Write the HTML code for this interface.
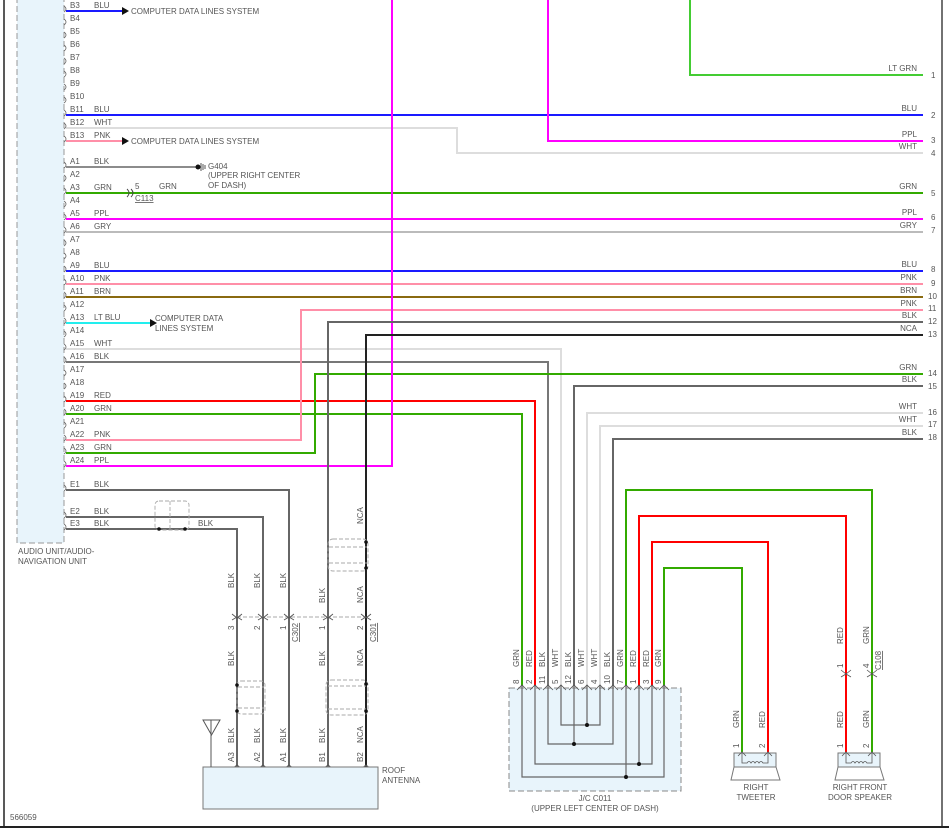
<!DOCTYPE html>
<html><head><meta charset="utf-8"><style>
html,body{margin:0;padding:0;background:#fff;}
svg{display:block;font-family:"Liberation Sans",sans-serif;}
text{font-size:8px;fill:#555;}
</style></head><body>
<svg width="949" height="835" viewBox="0 0 949 835" xmlns="http://www.w3.org/2000/svg">
<!-- frame -->
<line x1="4" y1="0" x2="4" y2="827" stroke="#222" stroke-width="1.5"/>
<line x1="942" y1="0" x2="942" y2="827" stroke="#444" stroke-width="1.5"/>
<line x1="0" y1="827" x2="949" y2="827" stroke="#222" stroke-width="2"/>
<!-- audio unit -->
<rect x="17" y="-2" width="47" height="545" fill="#e8f4fb" stroke="#999" stroke-dasharray="6,3"/>
<text x="18" y="554">AUDIO UNIT/AUDIO-</text>
<text x="18" y="564">NAVIGATION UNIT</text>
<text x="10" y="820">566059</text>

<g fill="none" stroke-width="2">
<!-- left wires -->
<path d="M66 11H122" stroke="#1a1aff"/>
<path d="M66 115H923" stroke="#1a1aff"/>
<path d="M66 128H457V153H923" stroke="#ddd"/>
<path d="M66 141H122" stroke="#ff8fa8"/>
<path d="M66 167H196" stroke="#666" stroke-width="1.5"/>
<path d="M66 193H923" stroke="#33aa00"/>
<path d="M66 219H923" stroke="#ff00ff"/>
<path d="M66 232H923" stroke="#bbb"/>
<path d="M66 271H923" stroke="#1a1aff"/>
<path d="M66 284H923" stroke="#ff8fa8"/>
<path d="M66 297H923" stroke="#8a6a10"/>
<path d="M66 323H150" stroke="#22eeee"/>
<path d="M66 349H561V686" stroke="#ddd"/>
<path d="M66 362H548V686" stroke="#777"/>
<path d="M66 401H535V686" stroke="#ff0000"/>
<path d="M66 414H522V686" stroke="#33aa00"/>
<path d="M66 440H301V310H923" stroke="#ff8fa8"/>
<path d="M66 453H315V374H923" stroke="#33aa00"/>
<path d="M66 466H392V0" stroke="#ff00ff"/>
<path d="M548 0V141H923" stroke="#ff00ff"/>
<path d="M690 0V75H923" stroke="#44cc33"/>
<path d="M328 767V322H923" stroke="#666"/>
<path d="M366 767V335H923" stroke="#222"/>
<path d="M574 686V386H923" stroke="#666"/>
<path d="M587 686V413H923" stroke="#ddd"/>
<path d="M600 686V426H923" stroke="#ddd"/>
<path d="M613 686V439H923" stroke="#666"/>
<path d="M66 490H289V767" stroke="#666"/>
<path d="M66 517H263V767" stroke="#666"/>
<path d="M66 529H237V767" stroke="#666"/>
<!-- speaker loops -->
<path d="M626 686V490H872V752" stroke="#33aa00"/>
<path d="M639 686V516H846V752" stroke="#ff0000"/>
<path d="M652 686V542H768V752" stroke="#ff0000"/>
<path d="M664 686V568H742V752" stroke="#33aa00"/>
</g>
<!-- arrows -->
<polygon points="122,7 129,11 122,15" fill="#111"/>
<polygon points="122,137 129,141 122,145" fill="#111"/>
<polygon points="150,319 157,323 150,327" fill="#111"/>
<!-- pin brackets & labels -->
<g fill="none" stroke="#666" stroke-width="0.8">
<path d="M64 6q4 3 0 6M64 19q4 3 0 6M64 32q4 3 0 6M64 45q4 3 0 6M64 58q4 3 0 6M64 71q4 3 0 6M64 84q4 3 0 6M64 97q4 3 0 6M64 110q4 3 0 6M64 123q4 3 0 6M64 136q4 3 0 6M64 162q4 3 0 6M64 175q4 3 0 6M64 188q4 3 0 6M64 201q4 3 0 6M64 214q4 3 0 6M64 227q4 3 0 6M64 240q4 3 0 6M64 253q4 3 0 6M64 266q4 3 0 6M64 279q4 3 0 6M64 292q4 3 0 6M64 305q4 3 0 6M64 318q4 3 0 6M64 331q4 3 0 6M64 344q4 3 0 6M64 357q4 3 0 6M64 370q4 3 0 6M64 383q4 3 0 6M64 396q4 3 0 6M64 409q4 3 0 6M64 422q4 3 0 6M64 435q4 3 0 6M64 448q4 3 0 6M64 461q4 3 0 6M64 485q4 3 0 6M64 512q4 3 0 6M64 524q4 3 0 6"/>
</g>
<g>
<text x="70" y="8">B3</text><text x="94" y="8">BLU</text>
<text x="70" y="21">B4</text><text x="70" y="34">B5</text><text x="70" y="47">B6</text><text x="70" y="60">B7</text><text x="70" y="73">B8</text><text x="70" y="86">B9</text><text x="70" y="99">B10</text>
<text x="70" y="112">B11</text><text x="94" y="112">BLU</text>
<text x="70" y="125">B12</text><text x="94" y="125">WHT</text>
<text x="70" y="138">B13</text><text x="94" y="138">PNK</text>
<text x="70" y="164">A1</text><text x="94" y="164">BLK</text>
<text x="70" y="177">A2</text>
<text x="70" y="190">A3</text><text x="94" y="190">GRN</text>
<text x="70" y="203">A4</text>
<text x="70" y="216">A5</text><text x="94" y="216">PPL</text>
<text x="70" y="229">A6</text><text x="94" y="229">GRY</text>
<text x="70" y="242">A7</text><text x="70" y="255">A8</text>
<text x="70" y="268">A9</text><text x="94" y="268">BLU</text>
<text x="70" y="281">A10</text><text x="94" y="281">PNK</text>
<text x="70" y="294">A11</text><text x="94" y="294">BRN</text>
<text x="70" y="307">A12</text>
<text x="70" y="320">A13</text><text x="94" y="320">LT BLU</text>
<text x="70" y="333">A14</text>
<text x="70" y="346">A15</text><text x="94" y="346">WHT</text>
<text x="70" y="359">A16</text><text x="94" y="359">BLK</text>
<text x="70" y="372">A17</text><text x="70" y="385">A18</text>
<text x="70" y="398">A19</text><text x="94" y="398">RED</text>
<text x="70" y="411">A20</text><text x="94" y="411">GRN</text>
<text x="70" y="424">A21</text>
<text x="70" y="437">A22</text><text x="94" y="437">PNK</text>
<text x="70" y="450">A23</text><text x="94" y="450">GRN</text>
<text x="70" y="463">A24</text><text x="94" y="463">PPL</text>
<text x="70" y="487">E1</text><text x="94" y="487">BLK</text>
<text x="70" y="514">E2</text><text x="94" y="514">BLK</text>
<text x="70" y="526">E3</text><text x="94" y="526">BLK</text>
<text x="198" y="526">BLK</text>
<text x="131" y="14">COMPUTER DATA LINES SYSTEM</text>
<text x="131" y="144">COMPUTER DATA LINES SYSTEM</text>
<text x="155" y="321">COMPUTER DATA</text>
<text x="155" y="331">LINES SYSTEM</text>
<text x="208" y="169">G404</text>
<text x="208" y="178">(UPPER RIGHT CENTER</text>
<text x="208" y="188">OF DASH)</text>
<text x="135" y="189">5</text><text x="159" y="189">GRN</text>
<text x="135" y="201" text-decoration="underline">C113</text>
</g>
<!-- G404 ground & C113 -->
<circle cx="198" cy="167" r="2.5" fill="#111"/>
<path d="M201 163v8M203 164v6M205 165v4" stroke="#555" stroke-width="1"/>
<path d="M127 189q4 4 0 8M131 189q4 4 0 8" stroke="#444" fill="none" stroke-width="0.9"/>
<!-- right labels -->
<g text-anchor="end">
<text x="917" y="71">LT GRN</text><text x="917" y="111">BLU</text><text x="917" y="137">PPL</text><text x="917" y="149">WHT</text>
<text x="917" y="189">GRN</text><text x="917" y="215">PPL</text><text x="917" y="228">GRY</text><text x="917" y="267">BLU</text>
<text x="917" y="280">PNK</text><text x="917" y="293">BRN</text><text x="917" y="306">PNK</text><text x="917" y="318">BLK</text>
<text x="917" y="331">NCA</text><text x="917" y="370">GRN</text><text x="917" y="382">BLK</text><text x="917" y="409">WHT</text>
<text x="917" y="422">WHT</text><text x="917" y="435">BLK</text>
</g>
<g>
<text x="931" y="78">1</text><text x="931" y="118">2</text><text x="931" y="143">3</text><text x="931" y="156">4</text>
<text x="931" y="196">5</text><text x="931" y="220">6</text><text x="931" y="233">7</text><text x="931" y="272">8</text>
<text x="931" y="286">9</text><text x="928" y="299">10</text><text x="928" y="311">11</text><text x="928" y="324">12</text>
<text x="928" y="337">13</text><text x="928" y="376">14</text><text x="928" y="389">15</text><text x="928" y="415">16</text>
<text x="928" y="427">17</text><text x="928" y="440">18</text>
</g>
<!-- shields -->
<g fill="none" stroke="#aaa" stroke-dasharray="4,2" stroke-width="0.9">
<rect x="155" y="501" width="34" height="29" rx="4"/>
<rect x="328" y="539" width="40" height="32" rx="5"/>
<rect x="237" y="681" width="28" height="33" rx="4"/>
<rect x="326" y="680" width="42" height="35" rx="5"/>
<path d="M170 501v29"/>
<path d="M329 547h38M329 563h38M238 687h26M238 708h26M328 686h38M328 709h38"/>
<path d="M237 617H366"/>
</g>
<g fill="#111">
<circle cx="159" cy="529" r="1.8"/><circle cx="185" cy="529" r="1.8"/>
<circle cx="366" cy="542" r="1.8"/><circle cx="366" cy="568" r="1.8"/>
<circle cx="237" cy="685" r="1.8"/><circle cx="237" cy="711" r="1.8"/>
<circle cx="366" cy="684" r="1.8"/><circle cx="366" cy="711" r="1.8"/>
</g>
<!-- C302/C301 connector marks -->
<g fill="none" stroke="#555" stroke-width="0.9">
<path d="M232 614l5 4 5-4M258 614l5 4 5-4M284 614l5 4 5-4M323 614l5 4 5-4M361 614l5 4 5-4"/>
<path d="M232 620l5-3 5 3M258 620l5-3 5 3M284 620l5-3 5 3M323 620l5-3 5 3M361 620l5-3 5 3"/>
<path d="M232 769l5-4 5 4M258 769l5-4 5 4M284 769l5-4 5 4M323 769l5-4 5 4M361 769l5-4 5 4"/>
</g>
<!-- roof antenna -->
<rect x="203" y="767" width="175" height="42" fill="#e8f4fb" stroke="#777"/>
<path d="M211 767V720M203 720h17l-8.5 15z" fill="none" stroke="#555"/>
<text x="382" y="773">ROOF</text><text x="382" y="783">ANTENNA</text>
<g>
<text transform="translate(234,588) rotate(-90)">BLK</text>
<text transform="translate(260,588) rotate(-90)">BLK</text>
<text transform="translate(286,588) rotate(-90)">BLK</text>
<text transform="translate(325,603) rotate(-90)">BLK</text>
<text transform="translate(363,524) rotate(-90)">NCA</text>
<text transform="translate(363,603) rotate(-90)">NCA</text>
<text transform="translate(234,630) rotate(-90)">3</text>
<text transform="translate(260,630) rotate(-90)">2</text>
<text transform="translate(286,630) rotate(-90)">1</text>
<text transform="translate(325,630) rotate(-90)">1</text>
<text transform="translate(363,630) rotate(-90)">2</text>
<text transform="translate(298,642) rotate(-90)" text-decoration="underline">C302</text>
<text transform="translate(376,642) rotate(-90)" text-decoration="underline">C301</text>
<text transform="translate(234,666) rotate(-90)">BLK</text>
<text transform="translate(325,666) rotate(-90)">BLK</text>
<text transform="translate(363,666) rotate(-90)">NCA</text>
<text transform="translate(234,743) rotate(-90)">BLK</text>
<text transform="translate(260,743) rotate(-90)">BLK</text>
<text transform="translate(286,743) rotate(-90)">BLK</text>
<text transform="translate(325,743) rotate(-90)">BLK</text>
<text transform="translate(363,743) rotate(-90)">NCA</text>
<text transform="translate(234,762) rotate(-90)">A3</text>
<text transform="translate(260,762) rotate(-90)">A2</text>
<text transform="translate(286,762) rotate(-90)">A1</text>
<text transform="translate(325,762) rotate(-90)">B1</text>
<text transform="translate(363,762) rotate(-90)">B2</text>
</g>
<!-- J/C C011 -->
<rect x="509" y="688" width="172" height="103" fill="#e8f4fb" stroke="#888" stroke-dasharray="6,3"/>
<g fill="none" stroke="#666" stroke-width="1.2">
<path d="M561 686V725H600V686M587 686V725"/>
<path d="M548 686V744H613V686M574 686V744"/>
<path d="M535 686V764H652V686M639 686V764"/>
<path d="M522 686V777H664V686M626 686V777"/>
</g>
<g fill="#111"><circle cx="587" cy="725" r="2"/><circle cx="574" cy="744" r="2"/><circle cx="639" cy="764" r="2"/><circle cx="626" cy="777" r="2"/></g>
<g fill="none" stroke="#555" stroke-width="0.8">
<path d="M517 690l5-5 5 5M530 690l5-5 5 5M543 690l5-5 5 5M556 690l5-5 5 5M569 690l5-5 5 5M582 690l5-5 5 5M595 690l5-5 5 5M608 690l5-5 5 5M621 690l5-5 5 5M634 690l5-5 5 5M647 690l5-5 5 5M659 690l5-5 5 5"/>
</g>
<g>
<text transform="translate(519,667) rotate(-90)">GRN</text><text transform="translate(532,667) rotate(-90)">RED</text>
<text transform="translate(545,667) rotate(-90)">BLK</text><text transform="translate(558,667) rotate(-90)">WHT</text>
<text transform="translate(571,667) rotate(-90)">BLK</text><text transform="translate(584,667) rotate(-90)">WHT</text>
<text transform="translate(597,667) rotate(-90)">WHT</text><text transform="translate(610,667) rotate(-90)">BLK</text>
<text transform="translate(623,667) rotate(-90)">GRN</text><text transform="translate(636,667) rotate(-90)">RED</text>
<text transform="translate(649,667) rotate(-90)">RED</text><text transform="translate(661,667) rotate(-90)">GRN</text>
<text transform="translate(519,684) rotate(-90)">8</text><text transform="translate(532,684) rotate(-90)">2</text>
<text transform="translate(545,684) rotate(-90)">11</text><text transform="translate(558,684) rotate(-90)">5</text>
<text transform="translate(571,684) rotate(-90)">12</text><text transform="translate(584,684) rotate(-90)">6</text>
<text transform="translate(597,684) rotate(-90)">4</text><text transform="translate(610,684) rotate(-90)">10</text>
<text transform="translate(623,684) rotate(-90)">7</text><text transform="translate(636,684) rotate(-90)">1</text>
<text transform="translate(649,684) rotate(-90)">3</text><text transform="translate(661,684) rotate(-90)">9</text>
</g>
<text x="595" y="801" text-anchor="middle">J/C C011</text>
<text x="595" y="811" text-anchor="middle">(UPPER LEFT CENTER OF DASH)</text>
<!-- tweeter -->
<rect x="734" y="753" width="42" height="14" fill="#e8f4fb" stroke="#777"/>
<path d="M734 767l-3 13h49l-4-13" fill="none" stroke="#777"/>
<path d="M742 753v10h5q2-3 4 0q2-3 4 0q2-3 4 0q2-3 4 0h5v-10" fill="none" stroke="#555" stroke-width="0.8"/>
<path d="M738 756l4-4 4 4M764 756l4-4 4 4" fill="none" stroke="#555" stroke-width="0.8"/>
<text x="756" y="790" text-anchor="middle">RIGHT</text><text x="756" y="800" text-anchor="middle">TWEETER</text>
<text transform="translate(739,728) rotate(-90)">GRN</text><text transform="translate(765,728) rotate(-90)">RED</text>
<text transform="translate(739,748) rotate(-90)">1</text><text transform="translate(765,748) rotate(-90)">2</text>
<!-- door speaker -->
<rect x="838" y="753" width="42" height="14" fill="#e8f4fb" stroke="#777"/>
<path d="M838 767l-3 13h49l-4-13" fill="none" stroke="#777"/>
<path d="M846 753v10h5q2-3 4 0q2-3 4 0q2-3 4 0q2-3 4 0h5v-10" fill="none" stroke="#555" stroke-width="0.8"/>
<path d="M842 756l4-4 4 4M868 756l4-4 4 4" fill="none" stroke="#555" stroke-width="0.8"/>
<text x="860" y="790" text-anchor="middle">RIGHT FRONT</text><text x="860" y="800" text-anchor="middle">DOOR SPEAKER</text>
<text transform="translate(843,644) rotate(-90)">RED</text><text transform="translate(869,644) rotate(-90)">GRN</text>
<text transform="translate(843,668) rotate(-90)">1</text><text transform="translate(869,668) rotate(-90)">4</text>
<text transform="translate(881,670) rotate(-90)" text-decoration="underline">C108</text>
<path d="M841 670l5 4 5-4M841 677l5-3 5 3M867 670l5 4 5-4M867 677l5-3 5 3" fill="none" stroke="#555" stroke-width="0.8"/>
<text transform="translate(843,728) rotate(-90)">RED</text><text transform="translate(869,728) rotate(-90)">GRN</text>
<text transform="translate(843,748) rotate(-90)">1</text><text transform="translate(869,748) rotate(-90)">2</text>
</svg>
</body></html>
